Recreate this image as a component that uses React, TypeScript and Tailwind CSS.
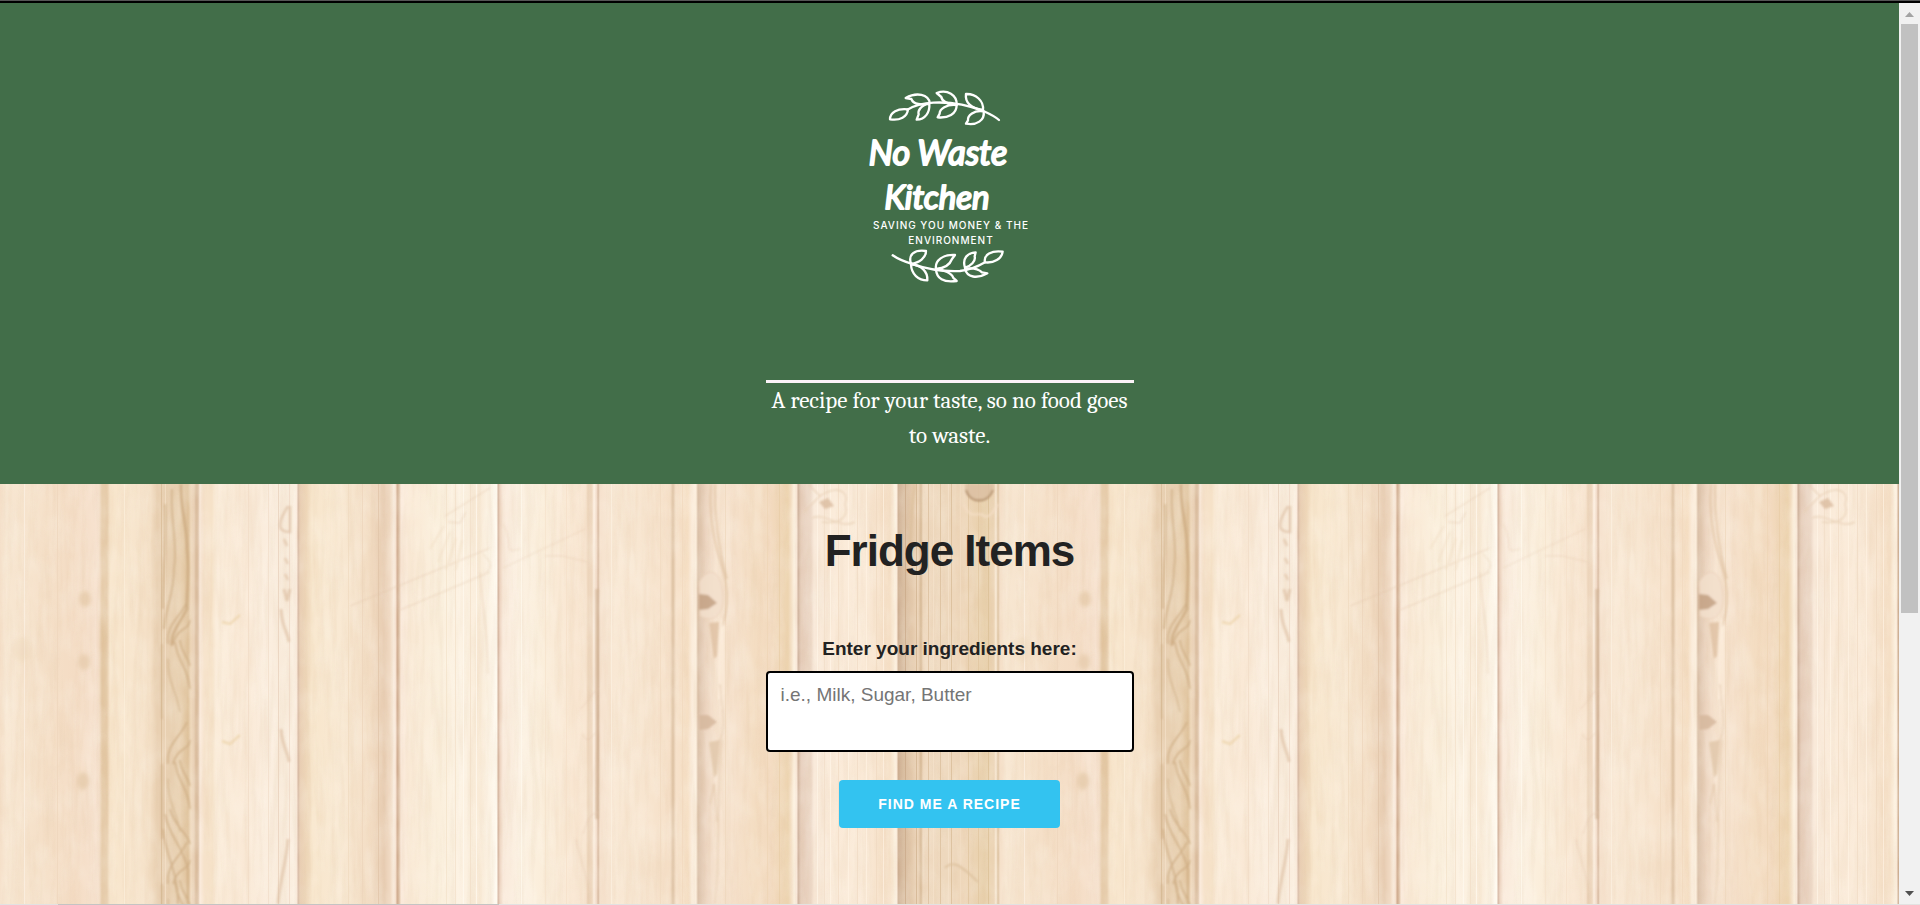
import React from "react";

const PLANK_TONES: [number, string][] = [
  [0, "#f5dfc8"], [6, "#f8e7d2"], [40, "#f5e0c8"], [75, "#f4dcc4"], [96, "#f7e2cf"], [99, "#f4dfca"], [102, "#e6cba9"], [107, "#e6cba9"], [110, "#f8e5cb"],
  [130, "#f8e6ce"], [150, "#f4dfc5"], [157, "#e9d0b2"], [172, "#e8d0b1"], [180, "#e9d1b1"], [188, "#dfc29b"], [191, "#efd9bd"], [194, "#ead2b8"], [196, "#d9bb9c"], [198, "#dcc0a4"], [200, "#fbeadb"],
  [204, "#f6e2ca"], [212, "#f6e2c8"], [216, "#fbecd9"], [245, "#fae9d6"], [270, "#fbeedf"], [285, "#f8ead9"], [295, "#fcf0e2"], [297, "#fbeadb"], [298, "#d4b7a2"], [300, "#e8cdb2"],
  [306, "#eed6b8"], [312, "#f8e6cc"], [340, "#f9e9d3"], [370, "#f3ddc4"], [384, "#e8cdb3"], [390, "#f0d9c2"], [394, "#fbeee0"], [396, "#f6dfcd"], [397, "#cda98d"], [399, "#dbbda2"], [401, "#fbeadb"],
  [410, "#faead6"], [440, "#fbefdc"], [460, "#fdf3e4"], [480, "#f9ead6"], [490, "#fdf4e6"], [497, "#fffaf0"], [498, "#cfae99"], [500, "#ecd2bf"], [503, "#faeadb"],
  [520, "#fcf1e2"], [540, "#fbeedb"], [575, "#f9e6d1"], [586, "#f8e5d0"], [588, "#ecd4ba"], [592, "#f0dac3"], [594, "#fff2e4"], [597, "#f0d8c5"], [598, "#d5b79e"], [600, "#f6e2ce"],
  [615, "#f9e8d4"], [640, "#f8e6d1"], [670, "#f6e0c8"], [673, "#ddc2a4"], [676, "#f7e2cb"], [688, "#f6dfc4"], [692, "#fbecdb"], [696, "#fdf0df"], [698, "#d9bfa7"], [706, "#ecd4bf"], [716, "#f7e4d0"],
  [735, "#f6e1cb"], [755, "#f4ddc2"], [770, "#f3dabf"], [788, "#edd4b0"], [791, "#f4dfc4"], [794, "#fdf1df"], [797, "#f8e5d5"], [798, "#ccaf9a"], [801, "#e5ccb9"], [811, "#ecd7c6"], [814, "#f9e9d9"],
  [835, "#fbebd9"], [865, "#fae9d6"], [890, "#f5dec4"], [895, "#fdf1df"], [897, "#fcecdc"], [898, "#cbac90"], [903, "#d8bda1"], [912, "#e3c8aa"], [918, "#edd5ba"], [921, "#d5b895"], [923, "#efd9bf"],
  [945, "#eed8bd"], [965, "#eed6b9"], [985, "#e8d0ab"], [994, "#ecd4b5"], [996, "#fbecd8"], [998, "#dcc19f"], [1000, "#f5dfc8"],
];

const GRAIN: [number, string][] = [
  [24, "#fdf2e4"], [57, "#eed6bd"], [124, "#fdf0dc"], [161, "#d8ba95"], [165, "#f5e2c9"], [248, "#f1dcc6"], [268, "#f2dec9"], [278, "#e8cfb9"], [289, "#eed8c5"],
  [348, "#f0dac0"], [362, "#edd5bb"], [378, "#e0c3a7"], [446, "#f3e2c9"], [455, "#f3e0ca"], [463, "#fffaf0"], [470, "#f2dfc8"], [476, "#fffaf0"], [521, "#fffaef"], [545, "#f6e3cc"],
  [566, "#f6e0c9"], [611, "#fdf1e2"], [660, "#f2dbc1"], [682, "#f2d9be"], [725, "#efd8bd"], [767, "#efd5b6"], [779, "#e9cda7"], [817, "#fff5e7"], [824, "#f1ddc8"], [830, "#fff5e7"], [838, "#f1dcc5"],
  [848, "#fff4e5"], [857, "#f0dac3"], [866, "#fff3e3"], [876, "#f0d9c1"], [883, "#fff3e3"], [905, "#c9a988"], [916, "#cfb18d"], [928, "#d9bd9a"], [933, "#f6e3cc"], [940, "#d9bd99"],
  [948, "#f6e3cc"], [951, "#d6b994"], [960, "#f3dec4"], [968, "#dfc49d"], [978, "#e0c59e"], [988, "#dbbf95"],
];

const WAVES = [0, 120, 240, 330];

function WoodPlanks() {
  return (
    <svg className="absolute inset-0 h-full w-full" aria-hidden="true">
      <defs>
        <linearGradient id="planks" gradientUnits="userSpaceOnUse" x1="0" y1="0" x2="1000" y2="0">
          {PLANK_TONES.map(([x, tone]) => (
            <stop key={x} offset={x / 1000} stopColor={tone} />
          ))}
        </linearGradient>
        <filter id="fibre" x="0" y="0" width="100%" height="100%">
          <feTurbulence type="fractalNoise" baseFrequency="0.16 0.014" numOctaves="3" seed="8" />
          <feColorMatrix values="0 0 0 0 0.68  0 0 0 0 0.47  0 0 0 0 0.28  0.9 0 0 0 -0.34" />
        </filter>
        <filter id="mottle" x="0" y="0" width="100%" height="100%">
          <feTurbulence type="fractalNoise" baseFrequency="0.06 0.03" numOctaves="3" seed="3" />
          <feColorMatrix values="0 0 0 0 1  0 0 0 0 0.97  0 0 0 0 0.9  1.1 0 0 0 -0.4" />
        </filter>
        <filter id="soft" x="-20%" y="-20%" width="140%" height="140%">
          <feGaussianBlur stdDeviation="1" />
        </filter>
        <filter id="softer" x="-20%" y="-20%" width="140%" height="140%">
          <feGaussianBlur stdDeviation="2" />
        </filter>
        <pattern id="wood" patternUnits="userSpaceOnUse" width="1000" height="640">
          <rect width="1000" height="640" fill="url(#planks)" />
          <rect width="1000" height="640" filter="url(#mottle)" opacity="0.4" />
          <rect width="1000" height="640" filter="url(#fibre)" opacity="0.35" />
          {GRAIN.map(([x, tone]) => (
            <rect key={x} x={x} width="1" height="640" fill={tone} opacity="0.7" />
          ))}
          <g fill="none" stroke="#cba97f" strokeWidth="1.5" filter="url(#soft)" opacity="0.85">
            <path d="M181 0C180 25 188 45 187 65C190 90 186 110 187 125C178 142 170 150 172 162" strokeWidth="2.5" />
            <path d="M172 5C170 35 178 60 174 85C174 110 166 122 164 145M165 20C167 55 163 85 163 125" />
            {WAVES.map((y) => (
              <g key={y}>
                <path d={`M190 ${y + 136}C188 ${y + 148} 178 ${y + 142} 173 ${y + 160}M187 ${y + 118}C180 ${y + 134} 166 ${y + 140} 168 ${y + 160}`} />
                <path d={`M175 ${y + 158}C178 ${y + 180} 187 ${y + 180} 190 ${y + 205}M180 ${y + 156}C181 ${y + 168} 187 ${y + 170} 190 ${y + 182}`} />
                <path d={`M168 ${y + 175}C168 ${y + 200} 176 ${y + 205} 180 ${y + 228}M162 ${y + 160}V${y + 235}`} opacity="0.7" />
              </g>
            ))}
            <path d="M165 330C170 355 182 360 188 385V420M170 325C174 342 187 348 190 360M163 345C166 375 178 385 178 420" />
          </g>
          <g fill="none" stroke="#dcbda0" filter="url(#soft)" opacity="0.65">
            <path d="M288 22C278 38 276 48 290 48V22M284 55L287 62M285 74L288 80M285 90L288 96" strokeWidth="2.5" />
            <path d="M284 105L287 117L290 105M281 125C282 145 288 148 289 158M281 245C282 262 288 268 289 278M288 355C286 380 280 395 278 420" strokeWidth="3" />
            <path d="M222 138L230 140L240 131M222 257L230 260L240 251" stroke="#ebd0a4" strokeWidth="2.5" />
            <path d="M350 122L490 64M400 126L490 88M445 32L490 4M448 38L460 39L466 28M483 70C494 80 490 86 486 88M480 88C482 120 488 150 488 190" opacity="0.8" />
            <path d="M430 65L444 42M438 78L450 48M446 86L456 54M456 86L462 56" stroke="#f1dfc6" strokeWidth="2" />
            <path d="M503 84L585 45M545 72H562L588 78M503 40C515 60 500 70 520 65" opacity="0.6" />
            <path d="M597 105V210M597 205C598 240 597 310 597 335" stroke="#c9a988" strokeWidth="3" />
            <path d="M580 225C592 215 590 208 599 205M583 250C588 265 594 245 597 250M583 350C588 335 590 330 598 328M576 355C582 385 590 395 588 420" opacity="0.8" />
          </g>
          <g filter="url(#softer)" opacity="0.75">
            <ellipse cx="85" cy="115" rx="6" ry="8" fill="#e4c8a6" />
            <ellipse cx="84" cy="178" rx="6" ry="8" fill="#e6cbab" />
            <ellipse cx="83" cy="297" rx="6" ry="9" fill="#e4c9a8" />
            <ellipse cx="22" cy="165" rx="10" ry="12" fill="#efd8bd" opacity="0.6" />
            <path d="M101 130C107 145 108 160 106 180V230L101 220ZM102 250C108 270 107 290 105 310Z" fill="#d8b98f" opacity="0.7" />
          </g>
          <g filter="url(#soft)" opacity="0.85">
            <path d="M711 0C708 35 716 65 724 90C730 115 726 135 720 145M715 0C714 40 720 70 727 95" fill="none" stroke="#dec09f" strokeWidth="1.5" />
            <path d="M699 98C712 78 722 92 723 110C725 130 714 140 700 132Z" fill="#f3dfcc" stroke="#e9cfb6" />
            <path d="M699 110L708 111L717 119L708 125L699 126Z" fill="#c3a183" />
            <path d="M709 139L719 138L717 172L714 175Z" fill="#dfc1a3" />
            <path d="M722 135C718 165 721 195 719 215M724 142C721 170 726 190 722 225" fill="none" stroke="#fff1e0" strokeWidth="2" />
            <path d="M699 231L708 231L717 238L708 245L699 246Z" fill="#d5b79c" />
            <path d="M709 258L720 256L717 290L714 294Z" fill="#e1c7aa" />
            <path d="M720 200C723 230 726 245 719 258M722 256C716 300 721 350 715 420M710 320L714 300L717 338" fill="none" stroke="#dfc4a7" />
            <path d="M808 0L820 12L804 28M820 12C838 0 850 8 845 20C850 36 836 40 822 38M812 34C826 28 840 46 855 38" fill="none" stroke="#e9d1b8" strokeWidth="1.5" />
            <path d="M819 18L828 14L834 22L825 25Z" fill="#dcbea2" />
            <path d="M965 0H994V5C992 12 987 17 979 17C971 17 966 12 965 5Z" fill="#dcc0a2" />
            <path d="M966 6C970 20 988 20 993 6" fill="none" stroke="#a98460" strokeWidth="2" />
            <path d="M964 20C970 38 980 26 984 32C990 35 994 26 998 20" fill="none" stroke="#f5dfc7" strokeWidth="2" />
            <path d="M945 384C952 376 960 380 978 398M915 0C910 30 912 50 908 80" fill="none" stroke="#dcc09c" strokeWidth="2" />
          </g>
        </pattern>
      </defs>
      <rect width="100%" height="100%" fill="url(#wood)" />
    </svg>
  );
}

function Logo() {
  return (
    <svg className="h-[220px] w-[200px]" viewBox="0 0 200 220" role="img" aria-label="No Waste Kitchen">
      <g transform="scale(0.3333)" fill="none" stroke="#fff" strokeWidth="7" strokeLinecap="round" strokeLinejoin="round">
        <path d="M172 104C200 88 225 84 250 83C310 80 360 92 400 108C420 117 435 124 447 135" />
        <path d="M120 133C120 112 143 99 174 103C172 125 150 138 120 133Z" />
        <path d="M167 69L184 72C190 88 215 92 239 84C236 58 200 50 167 69Z" />
        <path d="M238 86C212 90 203 108 206 118L200 134C226 134 240 112 238 86Z" />
        <path d="M260 54C292 42 322 60 320 90C296 88 276 80 274 66Z" />
        <path d="M320 90C290 86 268 104 269 116L263 127C294 130 320 118 320 90Z" />
        <path d="M348 57C378 56 402 78 399 105C370 100 344 88 348 57Z" />
        <path d="M401 109C372 104 352 122 354 136L348 146C380 152 405 136 401 109Z" />
      </g>
      <g fill="#fff" stroke="#fff" strokeLinejoin="round" strokeLinecap="round" textAnchor="middle" className="font-['Lato',sans-serif] font-normal italic">
        <text x="88" y="90" fontSize="34" strokeWidth="2">No Waste</text>
        <text x="87" y="134" fontSize="33" strokeWidth="2">Kitchen</text>
      </g>
      <g fill="#fff" textAnchor="middle" className="font-['Inter',sans-serif] text-[10px] font-medium tracking-[1px]">
        <text x="101" y="154">SAVING YOU MONEY &amp; THE</text>
        <text x="101" y="169">ENVIRONMENT</text>
      </g>
      <g transform="translate(0 100) scale(0.3333)" fill="none" stroke="#fff" strokeWidth="7" strokeLinecap="round" strokeLinejoin="round">
        <path d="M128 241C145 253 165 261 190 268C230 282 280 290 330 288C365 284 385 274 405 262" />
        <path d="M183 266C174 240 192 223 228 228C228 248 208 264 183 266Z" />
        <path d="M183 268C184 298 205 316 232 316C234 290 214 270 183 268Z" />
        <path d="M258 282C254 255 280 238 315 240L306 252C300 268 282 280 258 282Z" />
        <path d="M258 284C260 310 280 324 320 318L310 309C306 294 282 284 258 284Z" />
        <path d="M345 278C336 250 352 234 377 232L374 244C378 258 362 274 345 278Z" />
        <path d="M345 281C350 308 382 312 412 295L396 292C386 282 368 278 345 281Z" />
        <path d="M405 262C400 240 425 225 458 230C455 252 432 265 405 262Z" />
      </g>
    </svg>
  );
}

function ScrollRail() {
  return (
    <div className="flex w-[21px] shrink-0 flex-col items-center bg-[#f1f1f1]" aria-hidden="true">
      <svg className="h-[21px] w-[17px]" viewBox="0 0 17 21">
        <path d="M4 14L8.5 9L13 14Z" fill="#a3a3a3" />
      </svg>
      <div className="w-[17px] flex-[589] bg-[#c1c1c1]" />
      <div className="flex-[270]" />
      <svg className="h-[21px] w-[17px]" viewBox="0 0 17 21">
        <path d="M4 8L8.5 13L13 8Z" fill="#505050" />
      </svg>
    </div>
  );
}

export default function App() {
  return (
    <div className="flex min-h-screen flex-col border-t border-[#555] bg-white font-['Liberation_Sans',Arial,sans-serif] text-[#222]">
      <div className="h-[2px] bg-black" />
      <div className="flex flex-1">
        <div className="flex min-w-0 flex-1 flex-col">
          <header className="flex flex-col items-center bg-[#426e49] px-4 pt-[72px] pb-[31px]">
            <Logo />
            <p className="mt-[85px] w-full max-w-[368px] border-t-3 border-[#fbf3f8] text-center font-['Cambria','Caladea','Liberation_Serif',serif] text-[23px] leading-[35px] text-white">
              A recipe for your taste, so no food goes to waste.
            </p>
          </header>
          <main className="relative flex flex-1 flex-col items-center px-4 pt-10 pb-10">
            <WoodPlanks />
            <h1 className="relative text-[44px] leading-[54px] font-bold tracking-[-1px]">Fridge Items</h1>
            <form className="relative mt-[57px] flex w-full max-w-[368px] flex-col items-center" onSubmit={(e) => e.preventDefault()}>
              <label htmlFor="ingredients" className="text-[19px] leading-7 font-semibold">
                Enter your ingredients here:
              </label>
              <textarea
                id="ingredients"
                className="mt-2 block h-[81px] w-full resize-none rounded border-2 border-black bg-white px-[13px] py-2 text-[19px] leading-7 outline-none placeholder:text-[#757575]"
                placeholder="i.e., Milk, Sugar, Butter"
              />
              <button type="submit" className="mt-7 h-12 rounded bg-[#33c3f0] px-[39px] text-[14px] font-semibold tracking-[1px] text-white uppercase">
                Find me a recipe
              </button>
            </form>
          </main>
        </div>
        <ScrollRail />
      </div>
      <div className="flex h-px bg-[#e2e2e2]">
        <div className="w-[3%]" />
        <div className="w-[23%] bg-[#c4c4c4]" />
      </div>
    </div>
  );
}
